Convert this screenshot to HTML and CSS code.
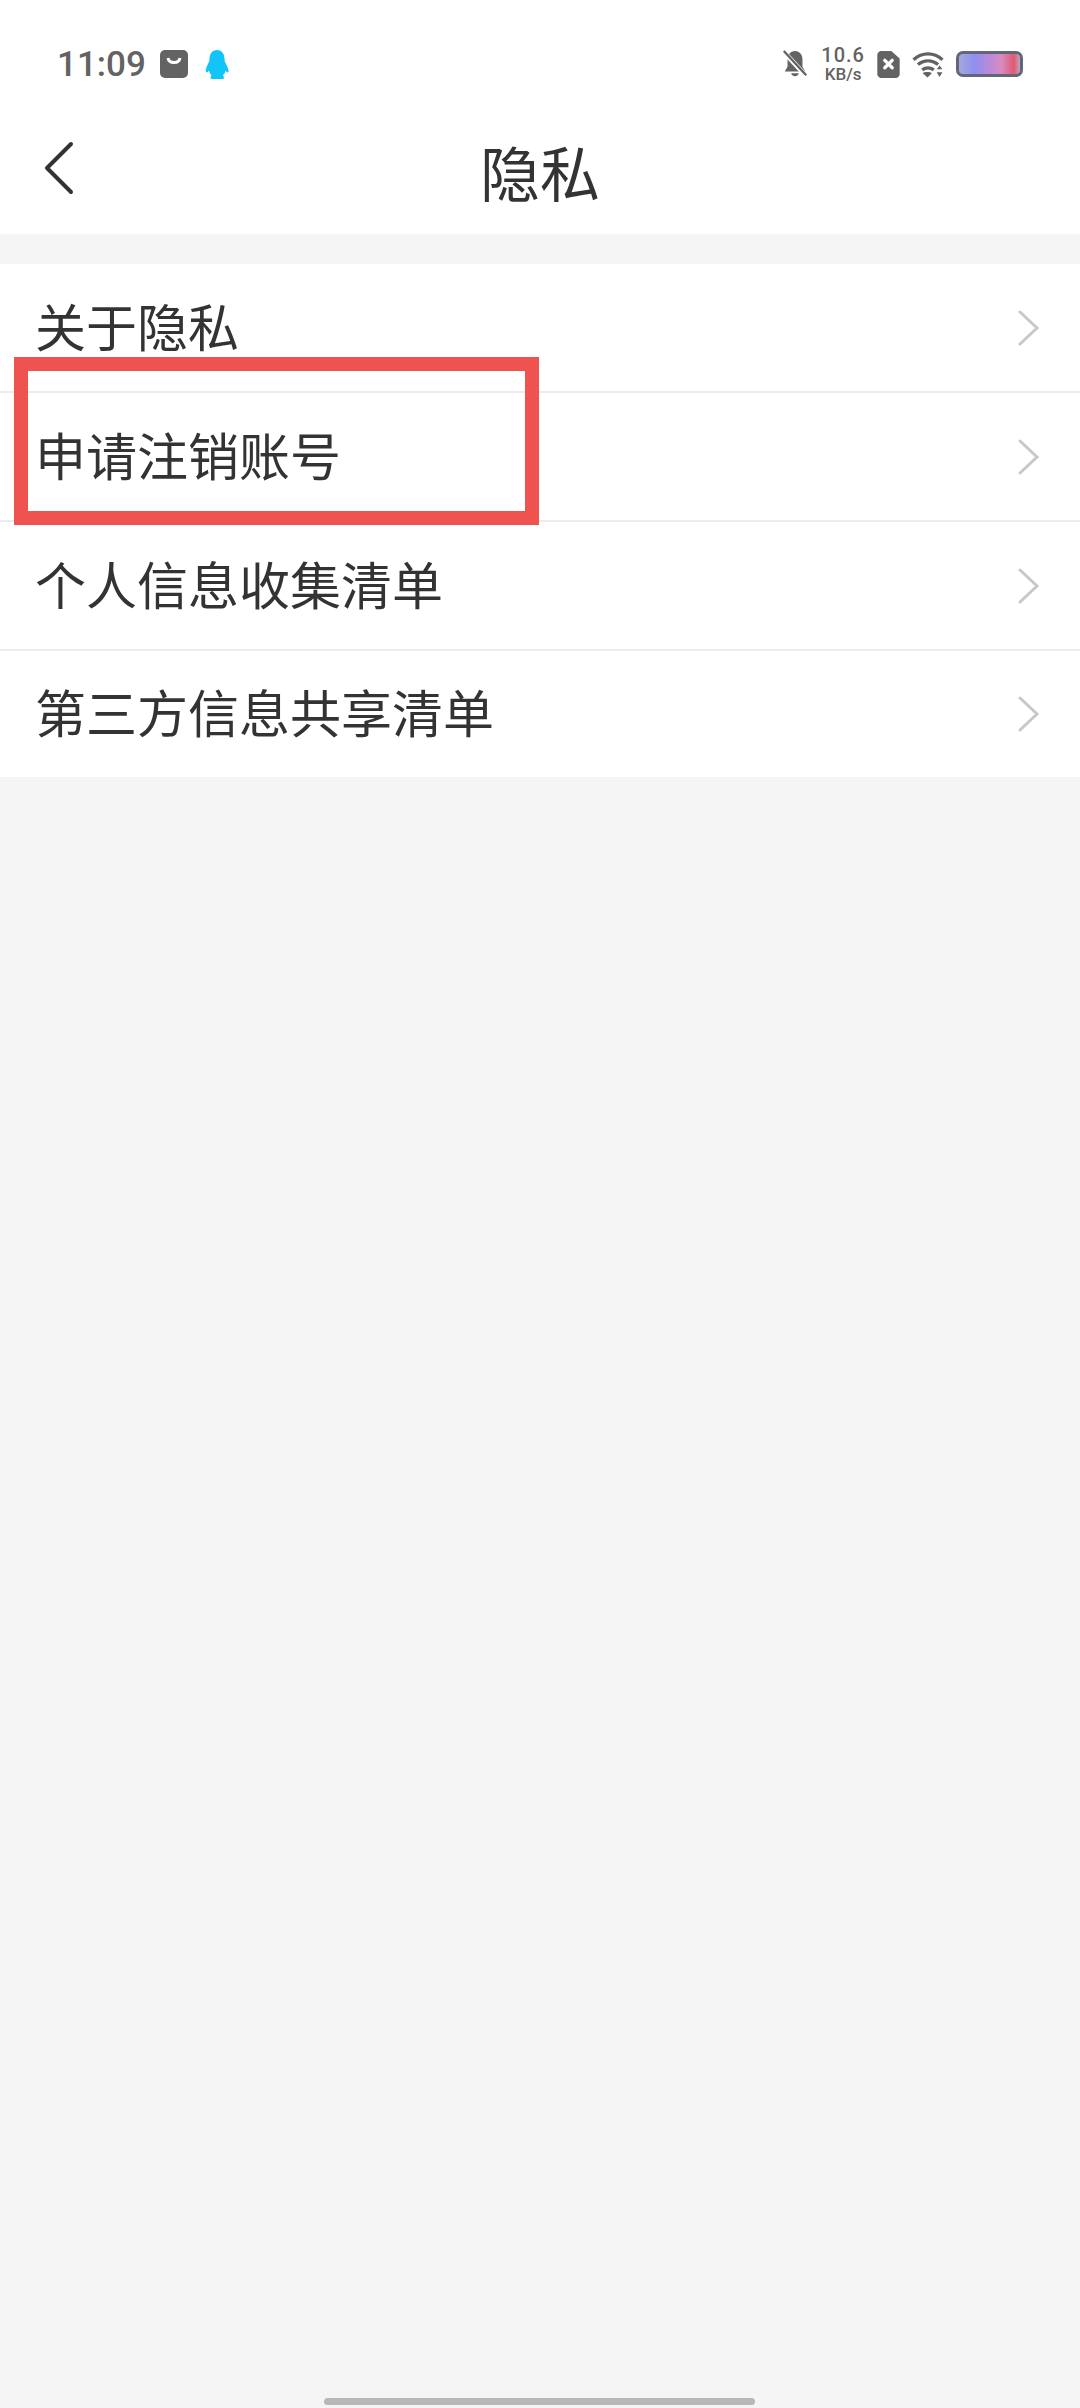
FILE: index.html
```html
<!DOCTYPE html>
<html lang="zh-CN">
  <head>
    <meta charset="UTF-8" />
    <title>隐私</title>
    <link rel="stylesheet" href="styles.css">
  </head>
  <body>
    <div class="top">
      <div class="status-bar">
        <div class="status-left">
          <span class="time">11:09</span>
          <svg class="bag" width="28" height="28" viewBox="0 0 28 28">
            <rect width="28" height="28" rx="5" fill="#636363" />
            <path d="M8 8c1 6 11 6 12 0" fill="none" stroke="#fff" stroke-width="3" />
          </svg>
          <svg class="qq" width="24" height="29" viewBox="0 0 24 29">
            <path d="M12 0c5 0 7.500 4 7.500 9 0 2 .5 3 2 6 1.500 3 3 7 1.500 7.500-.8.200-1.800-1-2.500-2-.3 2-1.200 3.500-2.500 4.500l1 2.500c.2 1-.5 1.500-1.500 1.500H7c-1 0-1.700-.5-1.500-1.500l1-2.500C5.200 24 4.300 22.500 4 20.500c-.7 1-1.700 2.200-2.500 2C0 22 1 18 2.500 15c1.500-3 2-4 2-6C4.500 4 7 0 12 0z" fill="#12c4f7" />
          </svg>
        </div>
        <div class="status-right">
          <svg class="bell" width="26" height="28" viewBox="0 0 26 30">
            <path d="M13 1c5 0 8 4 8 9v8l3 5H2l3-5v-8c0-5 3-9 8-9zM9 25h8c0 2-2 3-4 3s-4-1-4-3z" fill="#636363" />
            <path d="M1 2l24 26" stroke="#fff" stroke-width="5" />
            <path d="M1 1l24 26" stroke="#636363" stroke-width="2.500" />
          </svg>
          <div class="speed">
            <span class="speed-num">10.6</span>
            <span class="speed-unit">KB/s</span>
          </div>
          <svg class="sim" width="23" height="27" viewBox="0 0 24 29">
            <path d="M4 0h11l9 8v17c0 2-2 4-4 4H4c-2 0-4-2-4-4V4c0-2 2-4 4-4z" fill="#636363" />
            <path d="M8 10l8 8M16 10l-8 8" stroke="#fff" stroke-width="3.500" stroke-linecap="round" />
          </svg>
          <svg class="wifi" width="34" height="27" viewBox="0 0 34 28">
            <path d="M2 9c9-8 21-8 30 0M6.500 14c6.500-5 14.500-5 21 0M11 19.500c3.500-2.500 8.500-2.500 12 0" fill="none" stroke="#636363" stroke-width="3.500" />
            <path d="M11.500 23c2.500-1.500 7-1.500 9.500 0l-4.500 4.500z" fill="#636363" />
            <path d="M29 15l-3 4h6zM29 27l-3-5h6z" fill="#636363" />
          </svg>
          <div class="battery"></div>
        </div>
      </div>
      <div class="nav">
        <svg class="back" width="32" height="54" viewBox="0 0 32 54">
          <path d="M28 3L4 27l24 24" fill="none" stroke="#333" stroke-width="4" stroke-linecap="round" stroke-linejoin="round" />
        </svg>
        <h1>隐私</h1>
      </div>
    </div>

    <ul class="list">
      <li>
        <span>关于隐私</span>
        <svg class="arrow" width="22" height="36" viewBox="0 0 22 36"><path d="M2 2l17 16L2 34" /></svg>
      </li>
      <li>
        <span>申请注销账号</span>
        <svg class="arrow" width="22" height="36" viewBox="0 0 22 36"><path d="M2 2l17 16L2 34" /></svg>
      </li>
      <li>
        <span>个人信息收集清单</span>
        <svg class="arrow" width="22" height="36" viewBox="0 0 22 36"><path d="M2 2l17 16L2 34" /></svg>
      </li>
      <li>
        <span>第三方信息共享清单</span>
        <svg class="arrow" width="22" height="36" viewBox="0 0 22 36"><path d="M2 2l17 16L2 34" /></svg>
      </li>
    </ul>

    <div class="mark"></div>
    <div class="home-bar"></div>
  </body>
</html>
```

FILE: styles.css
```css
html,
body {
  margin: 0;
  padding: 0;
}
body {
  position: relative;
  width: 1080px;
  height: 2408px;
  overflow: hidden;
  background-color: #f5f5f5;
  font-family: "Noto Sans CJK SC", "Noto Sans", sans-serif;
  color: #333;
}
.top {
  background-color: #fff;
  height: 234px;
}
.status-bar {
  height: 112px;
  padding: 16px 57px 0 57px;
  box-sizing: border-box;
  display: flex;
  align-items: center;
  justify-content: space-between;
}
.status-left,
.status-right {
  display: flex;
  align-items: center;
}
.time {
  font-family: "Roboto", sans-serif;
  font-size: 35px;
  font-weight: 500;
  color: #636363;
  width: 87px;
  white-space: nowrap;
}
.bag {
  margin-left: 16px;
}
.qq {
  margin-left: 17px;
}
.speed {
  display: flex;
  flex-direction: column;
  align-items: center;
  margin-left: 13px;
  font-family: "Roboto", sans-serif;
  font-weight: 500;
  color: #636363;
}
.speed-num {
  font-size: 20px;
  line-height: 20px;
  letter-spacing: 1px;
}
.speed-unit {
  font-size: 17px;
  line-height: 18px;
}
.sim {
  margin-left: 12px;
}
.wifi {
  margin-left: 11px;
}
.battery {
  margin-left: 11px;
  width: 67px;
  height: 26px;
  box-sizing: border-box;
  border: 3px solid #636677;
  border-radius: 7px;
  background: linear-gradient(90deg, #a3a9dc 0%, #8f8ff0 25%, #b98ad8 50%, #d88bc0 70%, #e05a70 90%, #b8a8c0 100%);
}
.nav {
  position: relative;
  height: 122px;
  display: flex;
  align-items: center;
  justify-content: center;
}
.back {
  position: absolute;
  left: 43px;
  top: 29px;
}
.nav h1 {
  margin: 0;
  padding-bottom: 6px;
  font-size: 60px;
  font-weight: 400;
  color: #333;
}
.list {
  list-style: none;
  margin: 30px 0 0;
  padding: 0;
  background-color: #fff;
}
.list li {
  height: 129px;
  box-sizing: border-box;
  padding: 0 40px 0 35px;
  display: flex;
  align-items: center;
  justify-content: space-between;
  font-size: 51px;
  border-bottom: 2px solid #ececec;
}
.list li span {
  padding-bottom: 6px;
}
.list li:last-child {
  border-bottom: none;
  height: 126px;
}
.arrow {
  fill: none;
  stroke: #c8c8c8;
  stroke-width: 3;
  stroke-linecap: round;
}
.mark {
  position: absolute;
  left: 14px;
  top: 357px;
  width: 525px;
  height: 168px;
  box-sizing: border-box;
  border: 14px solid #ef5350;
}
.home-bar {
  position: absolute;
  left: 324px;
  top: 2398px;
  width: 431px;
  height: 7px;
  border-radius: 4px;
  background-color: #b8b8b8;
}
```
